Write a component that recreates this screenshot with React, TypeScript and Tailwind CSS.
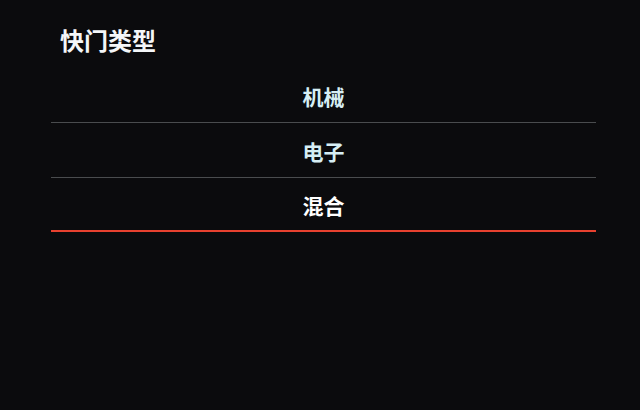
const items = [
  { label: "机械", selected: false },
  { label: "电子", selected: false },
  { label: "混合", selected: true },
];

export default function App() {
  return (
    <div
      className="h-[410px] w-[640px] overflow-hidden bg-[#0b0b0d] text-white"
      style={{ fontFamily: '"Noto Sans CJK SC", "Noto Sans", sans-serif' }}
    >
      <div className="pl-[60px] pt-[25px] text-[24px] font-bold leading-[30px] text-[#f4f6f8]">
        快门类型
      </div>
      <ul className="ml-[51px] mt-[13px] w-[545px]">
        {items.map((it) => (
          <li
            key={it.label}
            className={
              it.selected
                ? "flex h-[54px] items-center justify-center border-b-2 border-[#e8412f] pt-[4px] text-[21px] font-bold text-white"
                : "flex h-[55px] items-center justify-center border-b border-[#4a4c4e] pt-[3px] text-[21px] font-bold text-[#d6eef4]"
            }
          >
            {it.label}
          </li>
        ))}
      </ul>
    </div>
  );
}
